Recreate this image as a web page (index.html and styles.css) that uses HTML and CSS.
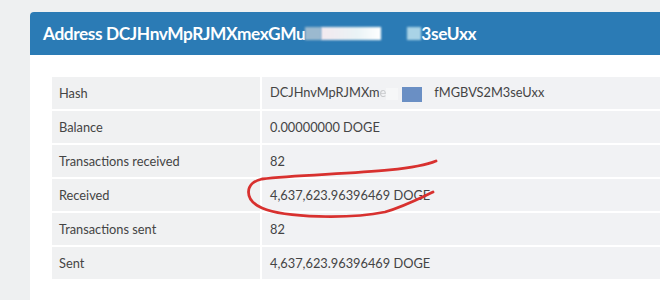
FILE: index.html
```html
<!DOCTYPE html>
<html>
<head>
<meta charset="utf-8">
<link rel="stylesheet" href="styles.css">
</head>
<body>
<div class="page">
  <section class="panel">
    <header class="panel-head">
      <h1 class="title">Address DCJHnvMpRJMXmexGMu<span class="blur b1"></span><span class="blur b2"></span><span class="gap"></span><span class="blur b3"></span>3seUxx</h1>
    </header>
    <div class="panel-body">
      <table class="info">
        <tr><td class="k">Hash</td><td class="v">DCJHnvMpRJMXm<span class="ghost">e</span><span class="fade"></span><span class="sq"></span><span class="fade2"></span>fMGBVS2M3seUxx</td></tr>
        <tr><td class="k">Balance</td><td class="v">0.00000000 DOGE</td></tr>
        <tr><td class="k">Transactions received</td><td class="v">82</td></tr>
        <tr><td class="k">Received</td><td class="v">4,637,623.96396469 DOGE</td></tr>
        <tr><td class="k">Transactions sent</td><td class="v">82</td></tr>
        <tr><td class="k">Sent</td><td class="v">4,637,623.96396469 DOGE</td></tr>
      </table>
    </div>
  </section>
  <svg class="mark" width="660" height="300" viewBox="0 0 660 300">
    <path d="M436,161 C405,174 310,173 262,179 C244,183 244,200 262,208 C285,218 350,219 385,212 C405,206 420,198 433,192" fill="none" stroke="#d8312f" stroke-width="2.8" stroke-linecap="round"/>
  </svg>
</div>
</body>
</html>
```
FILE: styles.css
```css
html, body {
  margin: 0;
  padding: 0;
  background: #eef0f1;
  overflow: hidden;
}
.page {
  position: relative;
  width: 660px;
  height: 300px;
  padding: 12px 0 0 30px;
  box-sizing: border-box;
  overflow: hidden;
  font-family: Lato, "Liberation Sans", sans-serif;
}
.panel {
  width: 680px;
  background: #fff;
  border-radius: 4px 4px 0 0;
  height: 320px;
}
.panel-head {
  background: #2b7bb5;
  height: 43px;
  border-radius: 4px 4px 0 0;
  display: flex;
  align-items: center;
  padding-left: 13px;
}
.title {
  margin: 0;
  color: #fff;
  font-size: 17.3px;
  font-weight: 700;
  letter-spacing: -0.4px;
  display: flex;
  align-items: center;
  white-space: nowrap;
}
.blur {
  display: inline-block;
  height: 13px;
  filter: blur(1px);
}
.b1 { width: 16px; background: #9bb9cf; }
.b2 { width: 60px; background: linear-gradient(90deg, #f3e9ef, #eaf3f6 60%, #ffffff); }
.gap { display: inline-block; width: 26px; }
.b3 { width: 14px; background: #a9d3e6; }
.panel-body {
  padding: 20px 20px 0 20px;
}
.info {
  border-collapse: collapse;
  width: 700px;
  font-size: 12.8px;
  color: #444;
}
.info td {
  height: 32px;
  padding: 0;
  border: 2px solid #fff;
  background: #f1f2f4;
}
.info .k {
  width: 201px;
  padding-left: 7px;
  background: #f0f1f2;
}
.info .v {
  padding-left: 8px;
}
.ghost {
  color: #c8cacc;
  filter: blur(0.6px);
}
.fade {
  display: inline-block;
  width: 12px;
  height: 12px;
  background: #f6f7f8;
  vertical-align: middle;
}
.sq {
  display: inline-block;
  width: 20px;
  height: 15px;
  background: #6a8fc4;
  vertical-align: middle;
  margin-left: 4px;
}
.fade2 {
  display: inline-block;
  width: 12px;
  height: 12px;
}
.mark {
  position: absolute;
  left: 0;
  top: 0;
  pointer-events: none;
}
```
